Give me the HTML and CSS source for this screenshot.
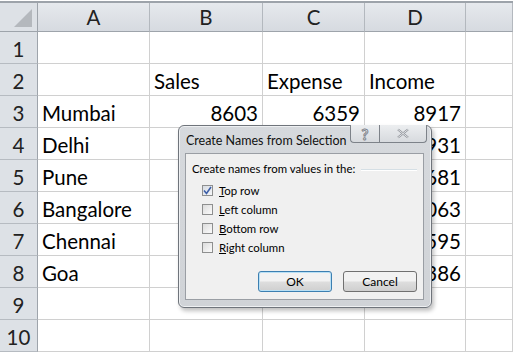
FILE: index.html
```html
<!DOCTYPE html>
<html lang="en">
<head>
    <meta charset="UTF-8">
    <title>Create Names from Selection</title>
    <link rel="stylesheet" href="styles.css">
</head>
<body>

    <div class="sheet">
        <div class="corner">
            <svg width="22" height="22" viewBox="0 0 22 22"><polygon points="20,2 20,20 2,20" fill="#b4b8bd"/></svg>
        </div>
        <div class="col-head">A</div>
        <div class="col-head">B</div>
        <div class="col-head">C</div>
        <div class="col-head">D</div>
        <div class="col-head"></div>

        <div class="row-head">1</div>
        <div class="cell"></div><div class="cell"></div><div class="cell"></div><div class="cell"></div><div class="cell"></div>

        <div class="row-head">2</div>
        <div class="cell"></div><div class="cell">Sales</div><div class="cell">Expense</div><div class="cell">Income</div><div class="cell"></div>

        <div class="row-head">3</div>
        <div class="cell">Mumbai</div><div class="cell num">8603</div><div class="cell num">6359</div><div class="cell num">8917</div><div class="cell"></div>

        <!-- B and C values of rows 4-8 sit under the dialog -->
        <div class="row-head">4</div>
        <div class="cell">Delhi</div><div class="cell"></div><div class="cell"></div><div class="cell num">5931</div><div class="cell"></div>

        <div class="row-head">5</div>
        <div class="cell">Pune</div><div class="cell"></div><div class="cell"></div><div class="cell num">4681</div><div class="cell"></div>

        <div class="row-head">6</div>
        <div class="cell">Bangalore</div><div class="cell"></div><div class="cell"></div><div class="cell num">7063</div><div class="cell"></div>

        <div class="row-head">7</div>
        <div class="cell">Chennai</div><div class="cell"></div><div class="cell"></div><div class="cell num">5595</div><div class="cell"></div>

        <div class="row-head">8</div>
        <div class="cell">Goa</div><div class="cell"></div><div class="cell"></div><div class="cell num">3386</div><div class="cell"></div>

        <div class="row-head">9</div>
        <div class="cell"></div><div class="cell"></div><div class="cell"></div><div class="cell"></div><div class="cell"></div>

        <div class="row-head">10</div>
        <div class="cell"></div><div class="cell"></div><div class="cell"></div><div class="cell"></div><div class="cell"></div>
    </div>

    <!-- dialog over the sheet -->
    <div class="dialog">
        <div class="titlebar">
            <span class="title">Create Names from Selection</span>
            <div class="caption-buttons">
                <div class="cap-btn help">?</div>
                <div class="cap-btn close">
                    <svg width="14" height="11" viewBox="0 0 14 11"><path d="M2 1.5 L12 9.5 M12 1.5 L2 9.5" stroke="#8c9097" stroke-width="2.2" fill="none"/><path d="M2 1.5 L12 9.5 M12 1.5 L2 9.5" stroke="#f4f5f6" stroke-width="0.8" fill="none"/></svg>
                </div>
            </div>
        </div>
        <div class="client">
            <div class="group-label">Create names from values in the:<span class="group-line"></span></div>
            <div class="options">
                <label class="option"><span class="box checked">
                    <svg width="9" height="9" viewBox="0 0 9 9"><path d="M1 4.5 L3.5 7.5 L8 1" stroke="#3d5fa8" stroke-width="1.6" fill="none"/></svg>
                </span><span><u>T</u>op row</span></label>
                <label class="option"><span class="box"></span><span><u>L</u>eft column</span></label>
                <label class="option"><span class="box"></span><span><u>B</u>ottom row</span></label>
                <label class="option"><span class="box"></span><span><u>R</u>ight column</span></label>
            </div>
            <div class="buttons">
                <button class="btn default">OK</button>
                <button class="btn">Cancel</button>
            </div>
        </div>
    </div>

</body>
</html>
```

FILE: styles.css
```css
/* sheet */
body {
    margin: 0;
    padding: 0;
    background-color: #fff;
    overflow: hidden;
    font-family: Lato, "Liberation Sans", sans-serif;
}
.sheet {
    margin-top: 1px;
    border-top: 2px solid #9da3aa;
    display: grid;
    grid-template-columns: 38px 112px 113px 102px 101px 1fr;
    grid-template-rows: 29px repeat(10, 32px);
    font-size: 20.5px;
    color: #000;
}
.corner, .col-head, .row-head {
    background-color: #dde1e6;
    color: #222;
    border-right: 1px solid #9ea4ab;
    border-bottom: 1px solid #9ea4ab;
    box-sizing: border-box;
}
.corner {
    display: flex;
    align-items: flex-end;
    justify-content: flex-end;
    padding: 0 3px 2px 0;
}
.col-head {
    display: flex;
    align-items: center;
    justify-content: center;
    background: linear-gradient(#e6e9ed, #d6dae0);
    border-right-color: #b3b8be;
}
.row-head {
    display: flex;
    align-items: center;
    justify-content: center;
    padding-top: 2px;
    border-bottom-color: #b6bbc1;
}
.cell {
    border-right: 1px solid #d0d0d0;
    border-bottom: 1px solid #d0d0d0;
    box-sizing: border-box;
    padding: 3px 4px 0 4px;
    display: flex;
    align-items: center;
    white-space: nowrap;
    overflow: hidden;
}
.num {
    justify-content: flex-end;
}

/* dialog */
.dialog {
    position: absolute;
    left: 178px;
    top: 125px;
    width: 254px;
    height: 183px;
    box-sizing: border-box;
    background: linear-gradient(#d6d9dd, #d0d3d7);
    border: 1px solid #6f747b;
    border-radius: 6px;
    box-shadow: inset 0 0 0 1px #eef0f2, 2px 3px 4px rgba(0, 0, 0, 0.25);
    font-size: 11.4px;
    color: #000;
    padding: 0 7px 7px 6px;
    display: flex;
    flex-direction: column;
}
.titlebar {
    height: 27px;
    display: flex;
    flex-shrink: 0;
}
.title {
    flex: 1;
    min-width: 0;
    white-space: nowrap;
    font-size: 12.5px;
    padding: 7px 0 0 1px;
    color: #111;
}
.caption-buttons {
    display: flex;
    flex-shrink: 0;
    margin-top: -1px;
    margin-right: -3px;
}
.cap-btn {
    height: 18px;
    box-sizing: border-box;
    border: 1px solid #7d8289;
    border-top: none;
    background: linear-gradient(#eceef0, #d7dade);
    display: flex;
    align-items: center;
    justify-content: center;
    color: #f2f3f4;
}
.help {
    width: 29px;
    border-radius: 0 0 0 4px;
    border-right: none;
    font-size: 15px;
    font-weight: bold;
    -webkit-text-stroke: 1px #7e838a;
}
.close {
    width: 48px;
    border-radius: 0 0 4px 0;
}
.client {
    flex: 1;
    background-color: #f0f0f0;
    border: 1px solid #9a9ea4;
    padding: 8px 6px 0 6px;
    display: flex;
    flex-direction: column;
}
.group-label {
    display: flex;
    align-items: center;
    white-space: nowrap;
}
.group-line {
    flex: 1;
    height: 0;
    border-top: 1px solid #d5dfe5;
    border-bottom: 1px solid #fff;
    margin: 2px 0 0 6px;
}
.options {
    padding: 9px 0 0 10px;
    display: flex;
    flex-direction: column;
    gap: 6px;
}
.option {
    display: flex;
    align-items: center;
    gap: 6px;
    height: 13px;
    white-space: nowrap;
}
.box {
    width: 11px;
    height: 11px;
    box-sizing: border-box;
    border: 1px solid #8e8f8f;
    background: linear-gradient(135deg, #dcdcdc, #fbfbfb);
    display: flex;
    align-items: center;
    justify-content: center;
}
.checked {
    background: linear-gradient(135deg, #d6dbe2, #f6f7f9);
}
.buttons {
    margin-top: auto;
    margin-bottom: 7px;
    display: flex;
    justify-content: flex-end;
    gap: 11px;
}
.btn {
    width: 74px;
    height: 21px;
    font-family: Lato, "Liberation Sans", sans-serif;
    font-size: 12px;
    color: #000;
    border: 1px solid #707070;
    border-radius: 3px;
    background: linear-gradient(#f2f2f2 45%, #dddddd 55%, #cfcfcf);
    padding: 0;
}
.default {
    border-color: #3c7fb1;
    box-shadow: inset 0 0 0 1px #b9e0f5;
}
```
